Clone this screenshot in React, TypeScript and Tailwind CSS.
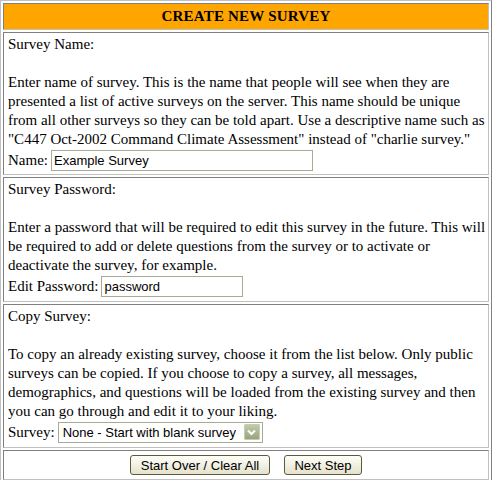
import React from "react";

const cell =
  "border border-t-[#808080] border-l-[#808080] border-r-[#c0c0c0] border-b-[#c0c0c0] px-[4px]";

const inputCls =
  "h-[21px] border border-[#a5ac93] bg-white px-[2px] font-['Liberation_Sans',Arial,sans-serif] text-[13px] text-black outline-none align-middle";

function Lines({ lines }: { lines: string[] }) {
  return (
    <div>
      {lines.map((l, i) => (
        <div key={i} className="whitespace-nowrap">
          {l}
        </div>
      ))}
    </div>
  );
}

export default function App() {
  return (
    <div className="w-[492px] border border-t-[#c0c0c0] border-l-[#c0c0c0] border-r-[#808080] border-b-[#808080] p-[2px] flex flex-col gap-[2px] bg-white font-['Liberation_Serif',serif] text-[15px] leading-[19px] text-black">
      <div className={`${cell} bg-[#ffa500] text-center font-bold py-[3px] tracking-[0.2px]`}>
        CREATE NEW SURVEY
      </div>

      <div className={`${cell} pt-[2px] pb-[3px]`}>
        <div>Survey Name:</div>
        <div className="h-[19px]" />
        <Lines
          lines={[
            "Enter name of survey. This is the name that people will see when they are",
            "presented a list of active surveys on the server. This name should be unique",
            "from all other surveys so they can be told apart. Use a descriptive name such as",
            "\"C447 Oct-2002 Command Climate Assessment\" instead of \"charlie survey.\"",
          ]}
        />
        <div className="flex items-center gap-[3px] h-[22px]">
          <span>Name:</span>
          <input className={`${inputCls} w-[262px]`} defaultValue="Example Survey" />
        </div>
      </div>

      <div className={`${cell} pt-[2px] pb-[4px]`}>
        <div>Survey Password:</div>
        <div className="h-[19px]" />
        <Lines
          lines={[
            "Enter a password that will be required to edit this survey in the future. This will",
            "be required to add or delete questions from the survey or to activate or",
            "deactivate the survey, for example.",
          ]}
        />
        <div className="flex items-center gap-[3px] h-[22px]">
          <span>Edit Password:</span>
          <input className={`${inputCls} w-[142px]`} defaultValue="password" />
        </div>
      </div>

      <div className={`${cell} pt-[2px] pb-[4px]`}>
        <div>Copy Survey:</div>
        <div className="h-[19px]" />
        <Lines
          lines={[
            "To copy an already existing survey, choose it from the list below. Only public",
            "surveys can be copied. If you choose to copy a survey, all messages,",
            "demographics, and questions will be loaded from the existing survey and then",
            "you can go through and edit it to your liking.",
          ]}
        />
        <div className="flex items-center gap-[3px] h-[22px]">
          <span>Survey:</span>
          <div className="h-[21px] w-[205px] border border-[#a5ac93] bg-white flex items-center justify-between pl-[4px] pr-[2px] font-['Liberation_Sans',Arial,sans-serif] text-[13px]">
            <span>None - Start with blank survey</span>
            <span className="w-[16px] h-[16px] flex items-center justify-center rounded-[1px] border border-[#c6ccb4] bg-gradient-to-b from-[#c3cba9] to-[#97a47d]">
              <svg width="9" height="7" viewBox="0 0 9 7">
                <path d="M1 1.5 L4.5 5 L8 1.5" stroke="white" strokeWidth="2" fill="none" />
              </svg>
            </span>
          </div>
        </div>
      </div>

      <div className={`${cell} flex justify-center gap-[14px] py-[4px]`}>
        <button className="h-[20px] w-[140px] rounded-[3px] border border-[#5c5a3c] bg-gradient-to-b from-[#fffffa] to-[#e4e2cc] font-['Liberation_Sans',Arial,sans-serif] text-[13px] leading-none">
          Start Over / Clear All
        </button>
        <button className="h-[20px] w-[78px] rounded-[3px] border border-[#5c5a3c] bg-gradient-to-b from-[#fffffa] to-[#e4e2cc] font-['Liberation_Sans',Arial,sans-serif] text-[13px] leading-none">
          Next Step
        </button>
      </div>
    </div>
  );
}
